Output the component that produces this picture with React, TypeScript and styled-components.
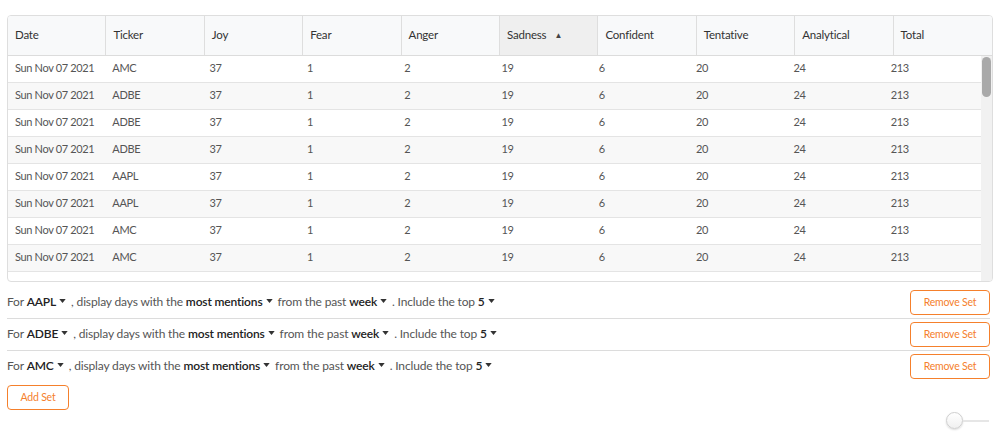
import React from 'react'
import styled, { createGlobalStyle } from 'styled-components'

const COLUMNS = ['Date', 'Ticker', 'Joy', 'Fear', 'Anger', 'Sadness', 'Confident', 'Tentative', 'Analytical', 'Total']
const TICKERS = ['AMC', 'ADBE', 'ADBE', 'ADBE', 'AAPL', 'AAPL', 'AMC', 'AMC']

const rows = TICKERS.map((ticker) => ({
  date: 'Sun Nov 07 2021',
  ticker,
  values: [37, 1, 2, 19, 6, 20, 24, 213],
}))

const sets = ['AAPL', 'ADBE', 'AMC']

const ORANGE = '#f5802c'
const FONT = "Lato, 'Liberation Sans', sans-serif"

const GlobalStyle = createGlobalStyle`
  html, body {
    margin: 0;
    padding: 0;
    background: #fff;
  }
  body {
    font-family: ${FONT};
    color: #333;
  }
`

export default function App() {
  return (
    <>
      <GlobalStyle />
      <Page>
        <Card>
          <HeaderRow>
            {COLUMNS.map((c) => (
              <HeaderCell key={c} sorted={c === 'Sadness'}>
                {c}
                {c === 'Sadness' && <SortIcon>▲</SortIcon>}
              </HeaderCell>
            ))}
          </HeaderRow>
          <BodyArea>
            <Rows>
              {rows.map((r, i) => (
                <BodyRow key={i} striped={i % 2 === 1}>
                  <Cell>{r.date}</Cell>
                  <Cell>{r.ticker}</Cell>
                  {r.values.map((v, j) => (
                    <Cell key={j}>{v}</Cell>
                  ))}
                </BodyRow>
              ))}
            </Rows>
            <ScrollRail>
              <ScrollThumb />
            </ScrollRail>
          </BodyArea>
        </Card>

        <SetList>
          {sets.map((t) => (
            <SetRow key={t}>
              <Sentence>
                For <Pick>{t}<Caret /></Pick>, display days with the{' '}
                <Pick>most mentions<Caret /></Pick>from the past{' '}
                <Pick>week<Caret /></Pick>. Include the top <Pick>5<Caret /></Pick>
              </Sentence>
              <OutlineButton wide>Remove Set</OutlineButton>
            </SetRow>
          ))}
        </SetList>

        <Footer>
          <OutlineButton>Add Set</OutlineButton>
          <Slider>
            <Knob />
            <Track />
          </Slider>
        </Footer>
      </Page>
    </>
  )
}

const Caret = () => (
  <CaretSvg viewBox="0 0 8 5" width="7" height="4">
    <path d="M0 0 L8 0 L4 5 Z" fill="#333" />
  </CaretSvg>
)

const Page = styled.div`
  width: 1000px;
  height: 433px;
  box-sizing: border-box;
  padding: 15px 8px 0 7px;
  overflow: hidden;
`
const Card = styled.div`
  width: 986px;
  height: 267px;
  box-sizing: border-box;
  border: 1px solid #dedede;
  border-radius: 4px;
  overflow: hidden;
  display: flex;
  flex-direction: column;
`
const HeaderRow = styled.div`
  display: grid;
  grid-template-columns: repeat(10, 1fr);
  height: 39px;
  flex: none;
  background: #f8f9fa;
  border-bottom: 1px solid #dcdcdc;
`
const HeaderCell = styled.div<{ sorted?: boolean }>`
  display: flex;
  align-items: center;
  gap: 8px;
  padding: 0 0 2px 7px;
  font-size: 11.5px;
  letter-spacing: -0.2px;
  color: #333;
  background: ${({ sorted }) => (sorted ? '#efefef' : 'transparent')};
  border-right: 1px solid #dedede;
  &:last-child {
    border-right: none;
  }
`
const SortIcon = styled.span`
  font-size: 8px;
  color: #444;
`
const BodyArea = styled.div`
  flex: 1;
  display: flex;
  min-height: 0;
  overflow: hidden;
`
const Rows = styled.div`
  flex: 1;
  min-width: 0;
`
const ScrollRail = styled.div`
  width: 11px;
  flex: none;
  background: #f1f1f1;
  padding: 1px 1px 0 1px;
  box-sizing: border-box;
`
const ScrollThumb = styled.div`
  height: 40px;
  border-radius: 5px;
  background: #a9a9a9;
`
const BodyRow = styled.div<{ striped?: boolean }>`
  display: grid;
  grid-template-columns: repeat(10, 1fr);
  height: 26px;
  box-sizing: content-box;
  align-items: center;
  border-bottom: 1px solid #e4e4e4;
  background: ${({ striped }) => (striped ? '#f8f8f8' : '#fff')};
`
const Cell = styled.div`
  padding: 0 0 3px 7px;
  font-size: 11px;
  letter-spacing: -0.35px;
  color: #555;
  white-space: nowrap;
`
const SetList = styled.div`
  margin-top: 5px;
  width: 983px;
`
const SetRow = styled.div`
  display: flex;
  align-items: center;
  justify-content: space-between;
  padding: 3px 0;
  border-bottom: 1px solid #dcdcdc;
  &:last-child {
    border-bottom: none;
  }
`
const Sentence = styled.div`
  font-size: 12px;
  letter-spacing: -0.15px;
  color: #555;
  white-space: nowrap;
  padding-bottom: 3px;
`
const Pick = styled.span`
  font-weight: 600;
  color: #222;
  margin-right: 5px;
`
const CaretSvg = styled.svg`
  margin-left: 3px;
  vertical-align: middle;
  position: relative;
  top: -1px;
`
const OutlineButton = styled.button<{ wide?: boolean }>`
  width: ${({ wide }) => (wide ? '80px' : '62px')};
  height: 25px;
  padding: 0 0 1px;
  border: 1px solid ${ORANGE};
  border-radius: 4px;
  background: #fff;
  color: ${ORANGE};
  font-family: ${FONT};
  font-size: 10.5px;
  letter-spacing: -0.2px;
  cursor: pointer;
`
const Footer = styled.div`
  display: flex;
  justify-content: space-between;
  align-items: flex-start;
  width: 982px;
  margin-top: 3px;
`
const Slider = styled.div`
  display: flex;
  align-items: center;
  margin-top: 27px;
`
const Knob = styled.div`
  width: 17px;
  height: 17px;
  box-sizing: border-box;
  border-radius: 50%;
  border: 1px solid #cfcfcf;
  background: linear-gradient(#fff, #f0f0f0);
  box-shadow: 0 1px 2px rgba(0, 0, 0, 0.15);
`
const Track = styled.div`
  width: 26px;
  height: 2px;
  background: #e6e6e6;
`
